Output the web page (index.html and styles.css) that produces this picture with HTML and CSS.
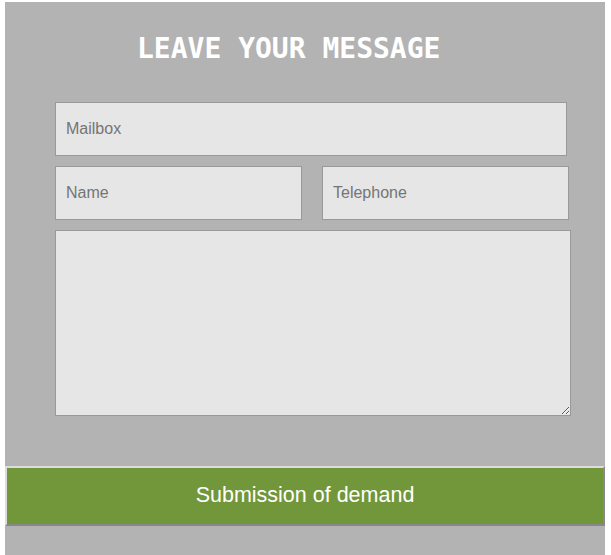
FILE: index.html
```html
<!DOCTYPE html>
<html lang="en">
<head>
  <meta charset="utf-8">
  <title>Leave your message</title>
  <link rel="stylesheet" href="styles.css">
</head>
<body>
  <div class="message-box">
    <h2 class="title">LEAVE YOUR MESSAGE</h2>

    <form class="message-form">
      <input type="text" class="field mailbox" placeholder="Mailbox">
      <div class="field-row">
        <input type="text" class="field half" placeholder="Name">
        <input type="text" class="field half" placeholder="Telephone">
      </div>
      <textarea class="field content"></textarea>
    </form>

    <button type="button" class="submit">Submission of demand</button>
  </div>
</body>
</html>
```

FILE: styles.css
```css
body {
  margin: 0;
  padding: 2px 5px 0;
  font-family: "Liberation Sans", Arial, sans-serif;
  background-color: #fff;
}
.message-box {
  width: 600px;
  height: 553px;
  background-color: #b3b3b3;
}
.title {
  margin: 0;
  padding: 33px 0 0 132px;
  font-family: "DejaVu Sans Mono", monospace;
  font-size: 28px;
  line-height: 28px;
  font-weight: bold;
  color: #fff;
}
.message-form {
  display: flex;
  flex-direction: column;
  gap: 10px;
  padding: 39px 0 0 50px;
}
.field {
  box-sizing: border-box;
  margin: 0;
  padding: 0 10px;
  height: 54px;
  border: 1px solid #999;
  background-color: #e6e6e6;
  font-family: "Liberation Sans", Arial, sans-serif;
  font-size: 16px;
  color: #333;
  outline: none;
}
.field::placeholder {
  color: #757575;
}
.mailbox {
  width: 512px;
}
.field-row {
  display: flex;
  gap: 20px;
}
.half {
  width: 247px;
}
.content {
  width: 516px;
  height: 186px;
  padding: 10px;
}
.submit {
  display: block;
  box-sizing: border-box;
  width: 600px;
  height: 60px;
  margin-top: 50px;
  padding: 0 0 2px;
  border: 2px solid;
  border-color: #dcdcdc #888 #888 #dcdcdc;
  background-color: #71973a;
  color: #fff;
  font-family: "Liberation Sans", Arial, sans-serif;
  font-size: 21.5px;
  cursor: pointer;
}
```
